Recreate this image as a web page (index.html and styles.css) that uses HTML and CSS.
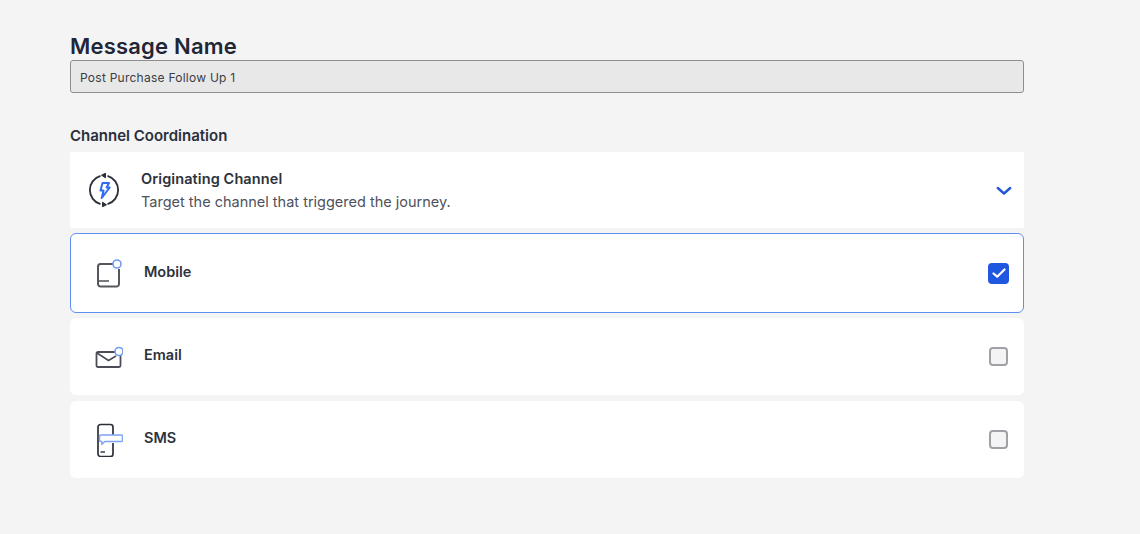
FILE: index.html
```html
<!DOCTYPE html>
<html lang="en">
<head>
  <meta charset="UTF-8">
  <title>Message Name</title>
  <link rel="stylesheet" href="styles.css">
</head>
<body>
  <div class="container">
    <h2>Message Name</h2>
    <div class="name-input">Post Purchase Follow Up 1</div>

    <h3>Channel Coordination</h3>

    <div class="channels">
      <div class="row row-head">
        <svg class="icon-head" width="34" height="34" viewBox="0 0 34 34" fill="none">
          <path d="M20.500 2.800A14.800 14.800 0 0 1 20.500 31.200" stroke="#2b2f38" stroke-width="1.800"/>
          <path d="M13.500 31.200A14.800 14.800 0 0 1 13.500 2.800" stroke="#2b2f38" stroke-width="1.800"/>
          <path d="M14.500 2.200L18.500 .2V4.800z" fill="#2b2f38" stroke="#2b2f38" stroke-linejoin="round"/>
          <path d="M19.500 31.800L15.500 29.200V33.800z" fill="#2b2f38" stroke="#2b2f38" stroke-linejoin="round"/>
          <path d="M15.500 10h6.500l-2.400 4.500h3.100l-8 10.500 1.900-7.400h-3.100z" stroke="#2f6bf0" stroke-width="2" stroke-linejoin="round"/>
        </svg>
        <div class="head-text">
          <div class="head-title">Originating Channel</div>
          <div class="head-sub">Target the channel that triggered the journey.</div>
        </div>
        <svg class="chevron" width="16" height="10" viewBox="0 0 16 10" fill="none">
          <path d="M1.800 2l6.200 5.500L14.200 2" stroke="#2158d8" stroke-width="2.400" stroke-linecap="round" stroke-linejoin="round"/>
        </svg>
      </div>

      <div class="row row-selected">
        <svg class="icon" width="28" height="30" viewBox="0 0 28 30" fill="none">
          <path d="M18 6H5.500A2.500 2.500 0 0 0 3 8.500V26a2.500 2.500 0 0 0 2.500 2.500h15.500A2.500 2.500 0 0 0 24 26V11" stroke="#55585f" stroke-width="2"/>
          <path d="M3.500 23H14" stroke="#55585f" stroke-width="1.600"/>
          <circle cx="22" cy="6" r="4" fill="#fff" stroke="#6f9bf2" stroke-width="1.600"/>
        </svg>
        <span class="row-label">Mobile</span>
        <span class="check check-on">
          <svg width="14" height="12" viewBox="0 0 14 12" fill="none"><path d="M1.500 6.500l3.700 3.200L12.500 2.500" stroke="#fff" stroke-width="2.200" stroke-linecap="round" stroke-linejoin="round"/></svg>
        </span>
      </div>

      <div class="row row-plain">
        <svg class="icon" width="28" height="24" viewBox="0 0 28 24" fill="none">
          <rect x="1.500" y="7" width="24" height="15" rx="1.500" stroke="#4a4d55" stroke-width="1.800"/>
          <path d="M2 8l11.500 7.500L21 11" stroke="#4a4d55" stroke-width="1.500"/>
          <circle cx="24" cy="6.500" r="4" fill="#fff" stroke="#6f9bf2" stroke-width="1.600"/>
        </svg>
        <span class="row-label">Email</span>
        <span class="check"></span>
      </div>

      <div class="row row-plain row-last">
        <svg class="icon" width="28" height="34" viewBox="0 0 28 34" fill="none">
          <path d="M3 12V4a2.500 2.500 0 0 1 2.500-2.500h10a2.500 2.500 0 0 1 2.500 2.500V12M18 20v11a2.500 2.500 0 0 1-2.500 2.500h-10A2.500 2.500 0 0 1 3 31V12" stroke="#2b2f38" stroke-width="1.700"/>
          <path d="M5.500 29h4.500" stroke="#2b2f38" stroke-width="1.400"/>
          <path d="M6 12h20.500a1 1 0 0 1 1 1v4.500a1 1 0 0 1-1 1H10l-3 2.500-.5-2.500H6a1.500 1.500 0 0 1-1.500-1.500V13.500A1.500 1.500 0 0 1 6 12z" fill="#fff" stroke="#7da4f3" stroke-width="1.500"/>
        </svg>
        <span class="row-label">SMS</span>
        <span class="check"></span>
      </div>
    </div>
  </div>
</body>
</html>
```
FILE: styles.css
```css
body {
  font-family: 'Inter', 'Liberation Sans', sans-serif;
  margin: 0;
  background: #f4f4f4;
  height: 534px;
  overflow: hidden;
}

.container {
  width: 954px;
  padding: 34px 0 0 70px;
}

h2 {
  margin: 0;
  font-size: 22px;
  line-height: 24px;
  font-weight: 600;
  letter-spacing: 0.2px;
  color: #1f2737;
}

.name-input {
  margin-top: 2px;
  box-sizing: border-box;
  height: 33px;
  line-height: 33px;
  padding-left: 9px;
  font-size: 12px;
  letter-spacing: 0.25px;
  color: #3a3d44;
  background: #e8e8e8;
  border: 1px solid #8e8e8e;
  border-radius: 3px;
}

h3 {
  margin: 33px 0 0;
  font-size: 15px;
  line-height: 20px;
  font-weight: 600;
  color: #2a2f3b;
}

.channels {
  margin-top: 6px;
  display: flex;
  flex-direction: column;
  gap: 5px;
}

.row {
  box-sizing: border-box;
  height: 77px;
  display: flex;
  align-items: center;
  padding: 0 16px 0 25px;
  background: #fff;
  border-radius: 6px;
}

.row-head {
  height: 76px;
  padding-left: 17px;
  padding-right: 12px;
  border-radius: 2px;
}

.row-selected {
  height: 80px;
  padding-left: 24px;
  padding-right: 14px;
  border: 1px solid #5f8ff0;
}

.row-last {
  margin-top: 1px;
}

.head-text {
  margin-left: 20px;
  flex: 1;
}

.head-title {
  font-size: 14.5px;
  line-height: 20px;
  font-weight: 600;
  letter-spacing: 0.1px;
  color: #2e323c;
}

.head-sub {
  margin-top: 3px;
  font-size: 14.5px;
  line-height: 20px;
  color: #4e525b;
}

.chevron {
  margin-top: 2px;
}

.row-label {
  margin: -3px 0 0 21px;
  flex: 1;
  font-size: 14.5px;
  font-weight: 600;
  color: #2e323c;
}

.row-plain .row-label {
  margin-top: -5px;
}

.check {
  box-sizing: border-box;
  width: 19px;
  height: 19px;
  display: flex;
  align-items: center;
  justify-content: center;
  border: 2px solid #a0a1a7;
  border-radius: 4px;
  background: #f4f4f4;
}

.check-on {
  width: 21px;
  height: 21px;
  border: none;
  background: #1f57e0;
}
```
